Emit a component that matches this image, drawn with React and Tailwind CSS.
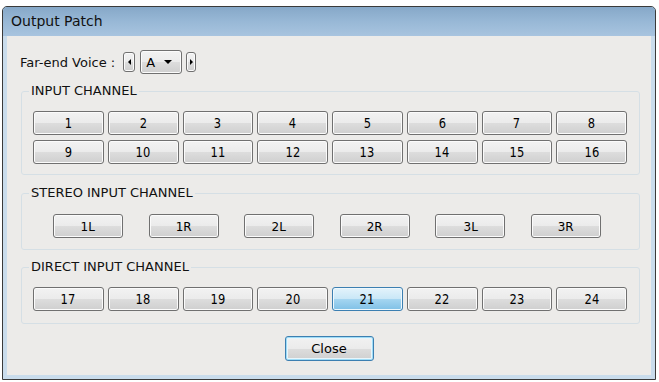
import React from "react";

const btnBase =
  "h-[24px] flex items-center justify-center rounded-[3px] border leading-none text-black";
const btnNormal =
  "border-[#707070] bg-[linear-gradient(to_bottom,#f2f2f2_0%,#ebebeb_50%,#dddddd_50%,#cfcfcf_100%)] shadow-[inset_0_0_0_1px_#fbfbfb]";
const btnSelected =
  "border-[#3c7fb1] bg-[linear-gradient(to_bottom,#e3f3fb_0%,#c9e7f7_50%,#a6d6f1_50%,#7fc0e6_100%)] shadow-[inset_0_0_0_1px_#eef8fd]";

function Btn({ label, selected, numeric, className = "" }) {
  return (
    <div className={`${btnBase} ${selected ? btnSelected : btnNormal} ${className}`}>
      {numeric ? (
        <span className="inline-block text-[14px] scale-x-[0.82]">{label}</span>
      ) : (
        <span className="inline-block text-[13px] scale-x-[0.92]">{label}</span>
      )}
    </div>
  );
}

function Group({ title, children, className = "" }) {
  return (
    <fieldset className={`mx-0 border border-[#d5dfe5] rounded-[3px] px-0 ${className}`}>
      <legend className="ml-[7px] px-[2px] text-[13px] leading-[16px] text-[#111]">{title}</legend>
      {children}
    </fieldset>
  );
}

function ArrowBtn({ dir, className = "" }) {
  return (
    <div
      className={`h-[20px] flex items-center justify-center rounded-[3px] border border-[#707070] bg-[linear-gradient(to_bottom,#f2f2f2_0%,#ebebeb_50%,#dddddd_50%,#cfcfcf_100%)] shadow-[inset_0_0_0_1px_#fbfbfb] ${className}`}
    >
      {dir === "left" ? (
        <div className="w-0 h-0 border-y-[3px] border-y-transparent border-r-[3px] border-r-black" />
      ) : (
        <div className="w-0 h-0 border-y-[3px] border-y-transparent border-l-[3px] border-l-black" />
      )}
    </div>
  );
}

export default function App() {
  const row1 = ["1", "2", "3", "4", "5", "6", "7", "8"];
  const row2 = ["9", "10", "11", "12", "13", "14", "15", "16"];
  const stereo = ["1L", "1R", "2L", "2R", "3L", "3R"];
  const direct = ["17", "18", "19", "20", "21", "22", "23", "24"];

  return (
    <div
      className="w-[659px] h-[382px] bg-white overflow-hidden"
      style={{ fontFamily: '"DejaVu Sans", "Liberation Sans", sans-serif' }}
    >
      <div className="ml-[2px] mt-[6px] w-[654px] h-[374px] border border-[#3a3a3a] rounded-t-[5px] flex flex-col bg-[#c9dcec] overflow-hidden">
        <div className="h-[29px] shrink-0 flex items-center pl-[8px] text-[14px] text-[#111] bg-[linear-gradient(to_bottom,#86a8c8_0%,#98b8d6_50%,#a8c4df_100%)]">
          Output Patch
        </div>
        <div className="flex-1 mx-[4px] mb-[4px] bg-[#ecebe9] flex flex-col pl-[14px] pr-[11px] pt-[14px]">
          {/* Far-end voice row */}
          <div className="h-[24px] flex items-center">
            <span className="ml-[-1px] text-[13px] text-[#111] leading-none">Far-end Voice :</span>
            <ArrowBtn dir="left" className="ml-[8px] w-[12px]" />
            <div className="ml-[5px] w-[42px] h-[24px] flex items-center justify-between pl-[5px] pr-[9px] rounded-[3px] border border-[#707070] bg-[linear-gradient(to_bottom,#f2f2f2_0%,#ebebeb_50%,#dddddd_50%,#cfcfcf_100%)] shadow-[inset_0_0_0_1px_#fbfbfb]">
              <span className="text-[13px] leading-none text-black">A</span>
              <div className="w-0 h-0 border-x-[4px] border-x-transparent border-t-[4px] border-t-black" />
            </div>
            <ArrowBtn dir="right" className="ml-[4px] w-[10px]" />
          </div>

          {/* INPUT CHANNEL */}
          <Group title="INPUT CHANNEL" className="mt-[9px]">
            <div className="pl-[11px] pr-[12px] pt-[12px] pb-[10px] grid grid-cols-8 gap-x-[4px] gap-y-[5px]">
              {row1.map((l) => (
                <Btn key={l} label={l} numeric />
              ))}
              {row2.map((l) => (
                <Btn key={l} label={l} numeric />
              ))}
            </div>
          </Group>

          {/* STEREO INPUT CHANNEL */}
          <Group title="STEREO INPUT CHANNEL" className="mt-[10px]">
            <div className="pl-[31px] pt-[13px] pb-[11px] flex gap-x-[25.6px]">
              {stereo.map((l) => (
                <Btn key={l} label={l} className="w-[70px]" />
              ))}
            </div>
          </Group>

          {/* DIRECT INPUT CHANNEL */}
          <Group title="DIRECT INPUT CHANNEL" className="mt-[9px]">
            <div className="pl-[11px] pr-[12px] pt-[12px] pb-[12px] grid grid-cols-8 gap-x-[4px]">
              {direct.map((l) => (
                <Btn key={l} label={l} numeric selected={l === "21"} />
              ))}
            </div>
          </Group>

          <div className="mt-[12px] flex justify-center pr-[3px]">
            <div className="w-[89px] h-[25px] flex items-center justify-center rounded-[3px] border border-[#3c7fb1] bg-[linear-gradient(to_bottom,#f2f2f2_0%,#ebebeb_50%,#dddddd_50%,#cfcfcf_100%)] shadow-[inset_0_0_0_1px_#9fdcf6,inset_0_0_0_2px_#e8f5fb] text-[13px] leading-none text-black">
              Close
            </div>
          </div>
        </div>
      </div>
    </div>
  );
}
